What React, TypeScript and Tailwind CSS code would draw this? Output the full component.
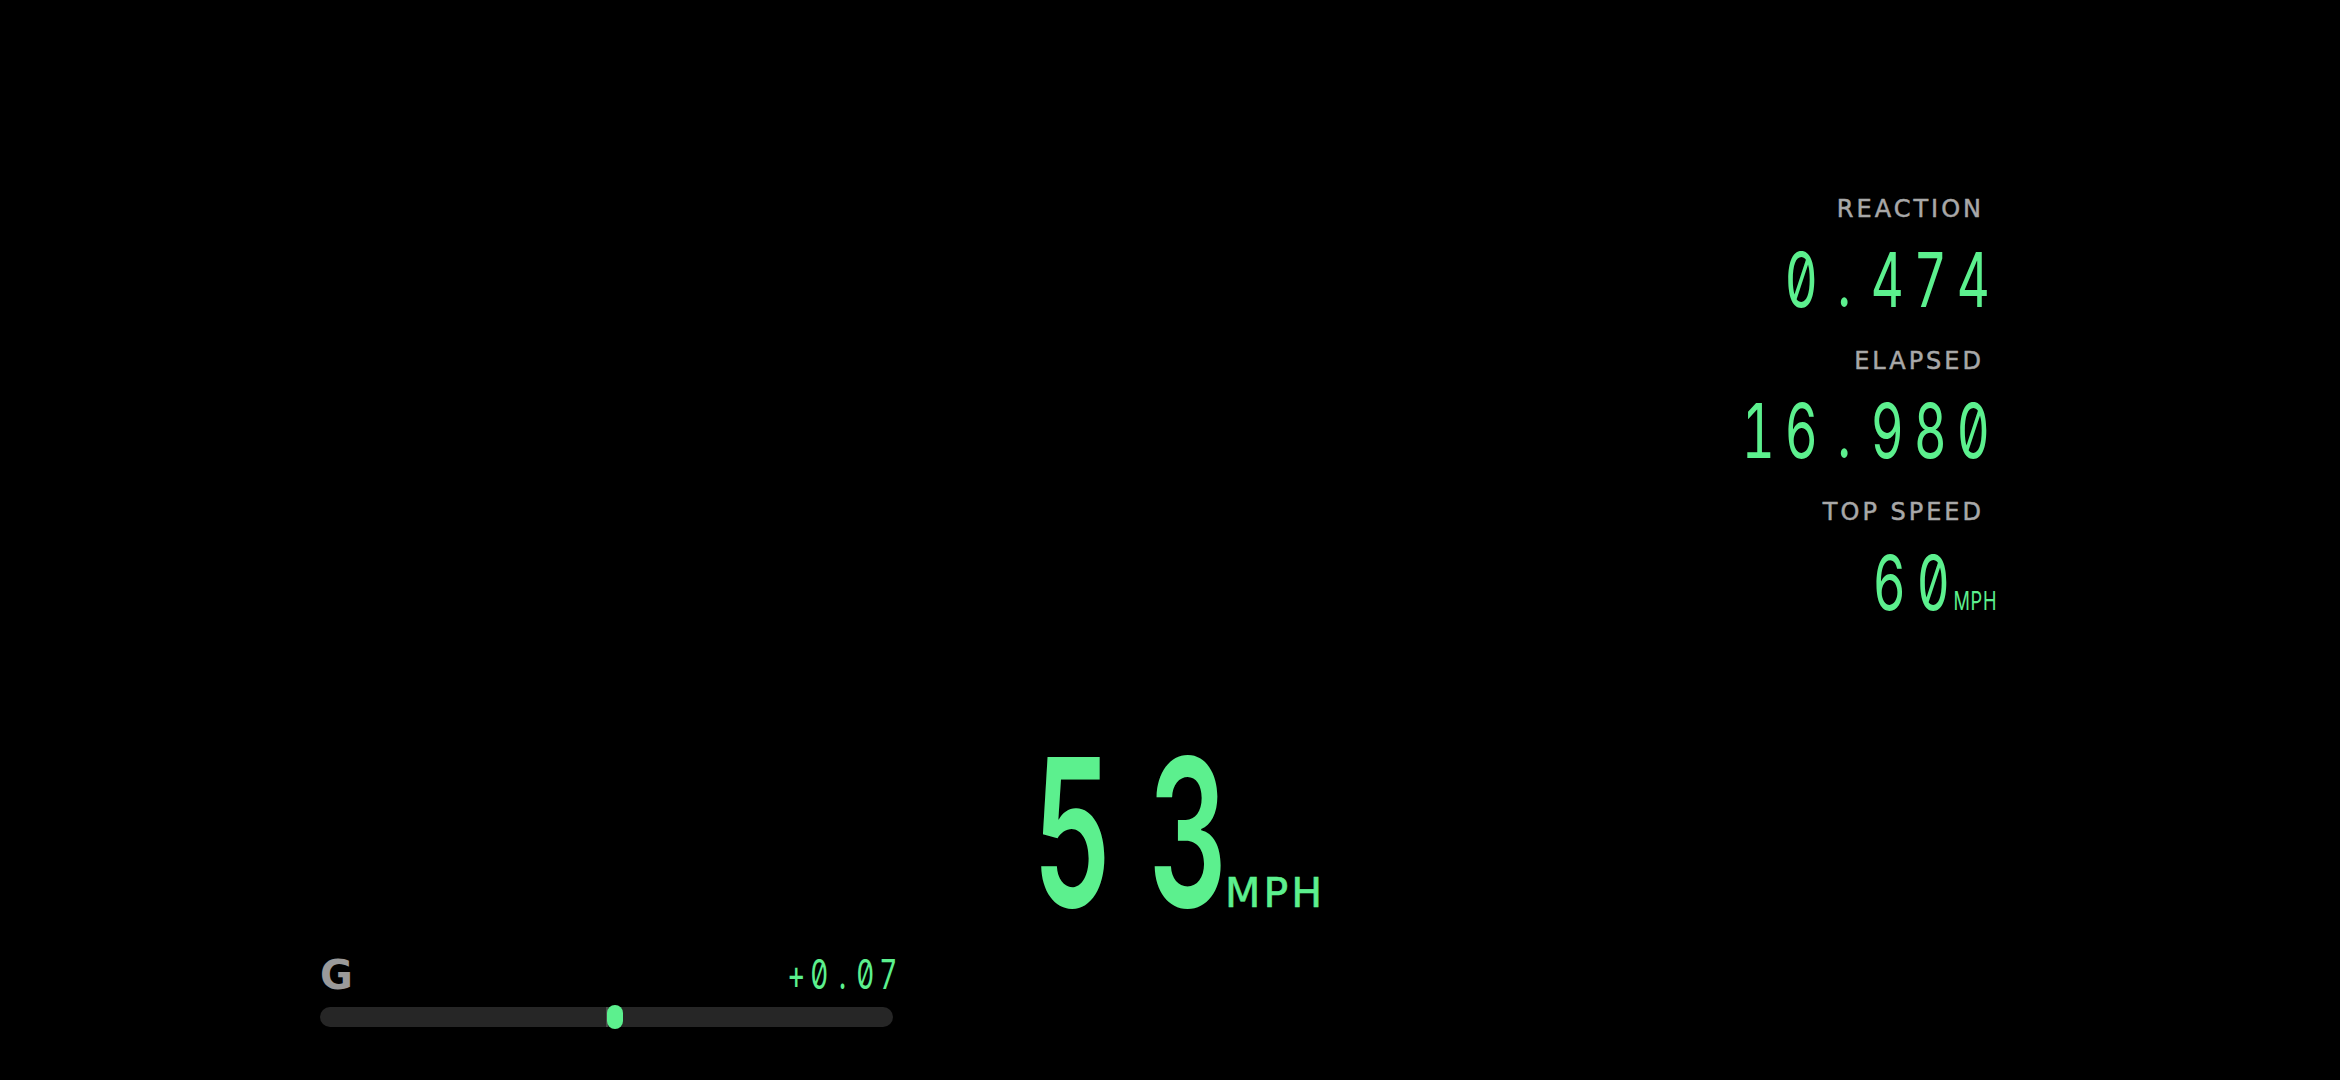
const DIGITS = "font-['Inter'] [font-feature-settings:'zero','tnum'] text-[#5cf08e]";
const LABEL =
  "font-['DejaVu_Sans'] text-[24px] leading-[28px] tracking-[3px] text-[#a8a8a8] [-webkit-text-stroke:0.5px_#a8a8a8]";

type MonoProps = {
  text: string;
  cell: string;
  squeeze: string;
  className?: string;
};

// each character sits in its own fixed cell, narrowed so the digits read like a condensed mono face
function Mono({ text, cell, squeeze, className = '' }: MonoProps) {
  return (
    <span className={`inline-flex ${className}`}>
      {[...text].map((ch, i) => (
        <span key={i} className={`inline-flex justify-center ${cell}`}>
          <span className={`inline-block ${squeeze}`}>{ch}</span>
        </span>
      ))}
    </span>
  );
}

function StatLabel({ children }: { children: string }) {
  return <div className={`mr-[-2px] ${LABEL}`}>{children}</div>;
}

export default function App() {
  return (
    <div className="flex h-[1080px] w-full flex-col overflow-hidden bg-black">
      {/* run stats */}
      <div className="flex justify-end pr-[358px] pt-[195px]">
        <div className="flex flex-col items-end">
          <StatLabel>REACTION</StatLabel>
          <Mono
            text="0.474"
            cell="w-[43px]"
            squeeze="scale-x-[0.68]"
            className={`mr-[-13px] mt-[19px] text-[75px] leading-[75px] ${DIGITS}`}
          />

          <div className="mt-[30px]">
            <StatLabel>ELAPSED</StatLabel>
          </div>
          <Mono
            text="16.980"
            cell="w-[43px]"
            squeeze="scale-x-[0.68]"
            className={`mr-[-13px] mt-[18px] text-[75px] leading-[75px] ${DIGITS}`}
          />

          <div className="mt-[30px]">
            <StatLabel>TOP SPEED</StatLabel>
          </div>
          <div className={`mr-[-15px] mt-[19px] flex items-baseline ${DIGITS}`}>
            <Mono text="60" cell="w-[44px]" squeeze="scale-x-[0.68]" className="text-[75px] leading-[75px]" />
            <Mono text="MPH" cell="w-[14px]" squeeze="scale-x-[0.7]" className="text-[26px] leading-[26px]" />
          </div>
        </div>
      </div>

      {/* current speed */}
      <div className="mt-[109px] flex justify-center pl-[25px]">
        <div className="flex items-baseline text-[#5cf08e]">
          <Mono
            text="53"
            cell="w-[66px]"
            squeeze="scale-x-[0.6]"
            className={`gap-[50px] text-[206px] font-semibold leading-[206px] ${DIGITS}`}
          />
          <span className="ml-[3px] font-['DejaVu_Sans'] text-[41px] leading-[40px] tracking-[3px] [-webkit-text-stroke:0.6px_#5cf08e]">
            MPH
          </span>
        </div>
      </div>

      {/* lateral g */}
      <div className="mt-[19px] flex pl-[320px]">
        <div className="flex w-[573px] flex-col">
          <div className="flex items-baseline justify-between">
            <span className="font-['DejaVu_Sans'] text-[40px] font-bold leading-[40px] text-[#9a9a9a]">G</span>
            <Mono
              text="+0.07"
              cell="w-[23px]"
              squeeze="scale-x-[0.68]"
              className={`mr-[-7px] text-[41px] leading-[40px] ${DIGITS}`}
            />
          </div>
          <div className="relative mt-[12px] h-[20px] w-full rounded-full bg-[#262626]">
            <div className="absolute left-1/2 top-0 h-full w-[2px] -translate-x-1/2 bg-[#4a4a4a]" />
            <div className="absolute left-[287px] top-[-2px] h-[24px] w-[16px] rounded-full bg-[#5cf08e]" />
          </div>
        </div>
      </div>
    </div>
  );
}
